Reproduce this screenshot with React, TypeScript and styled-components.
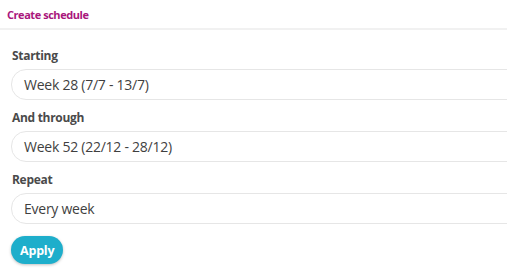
import styled, { createGlobalStyle } from 'styled-components';

const GlobalStyle = createGlobalStyle`
  html, body {
    margin: 0;
    padding: 0;
    background: #ffffff;
  }

  body {
    font-family: "Open Sans", "Noto Sans", sans-serif;
    overflow: hidden;
  }
`;

type Field = {
  label: string;
  value: string;
};

const fields: Field[] = [
  { label: 'Starting', value: 'Week 28 (7/7 - 13/7)' },
  { label: 'And through', value: 'Week 52 (22/12 - 28/12)' },
  { label: 'Repeat', value: 'Every week' },
];

export default function App() {
  return (
    <>
      <GlobalStyle />
      <Panel>
        <Header>
          <Title>Create schedule</Title>
        </Header>

        <Form>
          {fields.map((field) => (
            <Group key={field.label}>
              <Label>{field.label}</Label>
              <Input>{field.value}</Input>
            </Group>
          ))}

          <ApplyButton type="button">Apply</ApplyButton>
        </Form>
      </Panel>
    </>
  );
}

const Panel = styled.div`
  width: 507px;
  height: 272px;
  display: flex;
  flex-direction: column;
`;

const Header = styled.div`
  height: 28px;
  display: flex;
  align-items: center;
  padding: 0 7px;
  border-bottom: 2px solid #f1f1f1;
`;

const Title = styled.h1`
  margin: 0;
  font-size: 11px;
  font-weight: 700;
  letter-spacing: -0.45px;
  color: #a9177c;
`;

const Form = styled.div`
  display: flex;
  flex-direction: column;
  padding: 18px 0 0 11px;
`;

const Group = styled.div`
  display: flex;
  flex-direction: column;
  gap: 5px;
  margin-bottom: 10px;
`;

const Label = styled.div`
  font-size: 12px;
  font-weight: 700;
  letter-spacing: -0.3px;
  color: #4a4a4a;
  padding-left: 1px;
  line-height: 16px;
`;

const Input = styled.div`
  height: 29px;
  margin-right: -20px;
  display: flex;
  align-items: center;
  padding-left: 12px;
  border: 1px solid #e6e6e6;
  border-radius: 15px;
  font-size: 14px;
  letter-spacing: -0.25px;
  color: #3f3f3f;
`;

const ApplyButton = styled.button`
  align-self: flex-start;
  height: 28px;
  margin-top: 2px;
  padding: 0 9px;
  border: 0;
  border-radius: 14px;
  background: #1eaecb;
  box-shadow: 0 1px 3px rgba(0, 0, 0, 0.25);
  font-family: inherit;
  font-size: 12.5px;
  font-weight: 700;
  letter-spacing: -0.2px;
  color: #ffffff;
`;
